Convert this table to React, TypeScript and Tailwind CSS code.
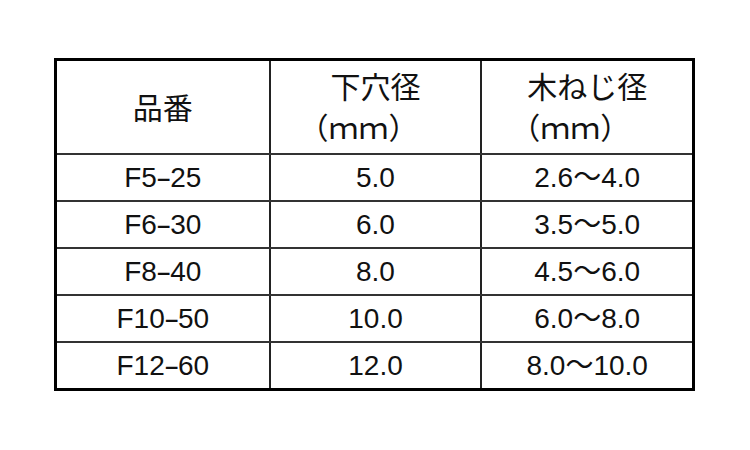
const FONT = { fontFamily: '"Liberation Sans", "Noto Sans CJK JP", sans-serif' };

type Row = { part: string; hole: string; screw: string };

const ROWS: Row[] = [
  { part: "F5-25", hole: "5.0", screw: "2.6〜4.0" },
  { part: "F6-30", hole: "6.0", screw: "3.5〜5.0" },
  { part: "F8-40", hole: "8.0", screw: "4.5〜6.0" },
  { part: "F10-50", hole: "10.0", screw: "6.0〜8.0" },
  { part: "F12-60", hole: "12.0", screw: "8.0〜10.0" },
];

// the dash in the part numbers is drawn long in the source sheet
function PartNo({ value }: { value: string }) {
  const [a, b] = value.split("-");
  return (
    <span>
      {a}
      <span className="mx-[2px] inline-block scale-x-[1.7]">-</span>
      {b}
    </span>
  );
}

function HeadCell({ title, unit, first }: { title: string; unit?: string; first?: boolean }) {
  return (
    <div
      className={`flex flex-col items-center justify-center text-[30px] ${first ? "pt-[2px]" : "border-l-2 border-[#222]"}`}
    >
      <div className="leading-[39px]">{title}</div>
      {unit && (
        <div className="pr-[34px] leading-[39px]" style={{ fontFamily: '"Noto Sans CJK JP", sans-serif' }}>
          {unit}
        </div>
      )}
    </div>
  );
}

export default function App() {
  return (
    <div className="h-[450px] w-[750px] bg-white pl-[54px] pt-[58px]" style={FONT}>
      <div className="w-[641px] border-[3px] border-black text-[28px] text-[#111]">
        <div className="grid h-[92px] grid-cols-3">
          <HeadCell title="品番" first />
          <HeadCell title="下穴径" unit="（ｍｍ）" />
          <HeadCell title="木ねじ径" unit="（ｍｍ）" />
        </div>
        {ROWS.map((row) => (
          <div key={row.part} className="grid h-[47px] grid-cols-3 border-t-2 border-[#333]">
            <div className="flex items-center justify-center">
              <PartNo value={row.part} />
            </div>
            <div className="flex items-center justify-center border-l-2 border-[#222]">{row.hole}</div>
            <div className="flex items-center justify-center border-l-2 border-[#222]">{row.screw}</div>
          </div>
        ))}
      </div>
    </div>
  );
}
